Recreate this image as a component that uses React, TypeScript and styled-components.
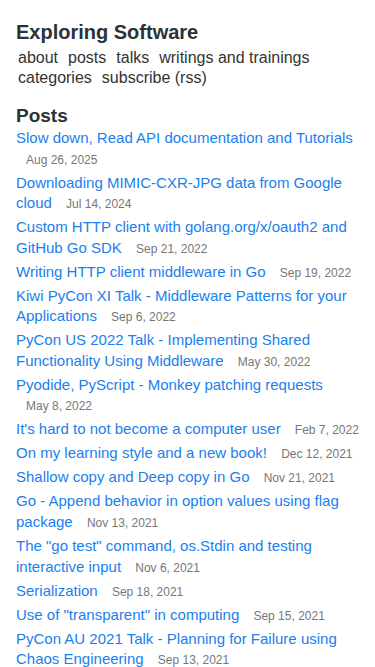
import styled, { createGlobalStyle } from "styled-components";

const GlobalStyle = createGlobalStyle`
  body {
    margin: 0;
    background: #fff;
    font-family: "Liberation Sans", Arial, sans-serif;
  }
`;

const posts = [
  { title: "Slow down, Read API documentation and Tutorials", date: "Aug 26, 2025" },
  { title: "Downloading MIMIC-CXR-JPG data from Google cloud", date: "Jul 14, 2024" },
  { title: "Custom HTTP client with golang.org/x/oauth2 and GitHub Go SDK", date: "Sep 21, 2022" },
  { title: "Writing HTTP client middleware in Go", date: "Sep 19, 2022" },
  { title: "Kiwi PyCon XI Talk - Middleware Patterns for your Applications", date: "Sep 6, 2022" },
  { title: "PyCon US 2022 Talk - Implementing Shared Functionality Using Middleware", date: "May 30, 2022" },
  { title: "Pyodide, PyScript - Monkey patching requests", date: "May 8, 2022" },
  { title: "It's hard to not become a computer user", date: "Feb 7, 2022" },
  { title: "On my learning style and a new book!", date: "Dec 12, 2021" },
  { title: "Shallow copy and Deep copy in Go", date: "Nov 21, 2021" },
  { title: "Go - Append behavior in option values using flag package", date: "Nov 13, 2021" },
  { title: "The \"go test\" command, os.Stdin and testing interactive input", date: "Nov 6, 2021" },
  { title: "Serialization", date: "Sep 18, 2021" },
  { title: "Use of \"transparent\" in computing", date: "Sep 15, 2021" },
  { title: "PyCon AU 2021 Talk - Planning for Failure using Chaos Engineering", date: "Sep 13, 2021" },
];

const navLinks = ["about", "posts", "talks", "writings and trainings", "categories", "subscribe (rss)"];

const App = () => {
  return (
    <Page>
      <GlobalStyle />
      <Header>
        <SiteTitle>Exploring Software</SiteTitle>
        <Nav>
          {navLinks.map((link) => (
            <NavLink href="#" key={link}>
              {link}
            </NavLink>
          ))}
        </Nav>
      </Header>
      <Section>
        <SectionTitle>Posts</SectionTitle>
        <PostList>
          {posts.map((post) => (
            <PostItem key={post.title}>
              <PostLink href="#">{post.title}</PostLink>{" "}
              <PostDate>{post.date}</PostDate>
            </PostItem>
          ))}
        </PostList>
      </Section>
    </Page>
  );
};

export default App;

const Page = styled.div`
  padding: 20px 16px 0;
`;

const Header = styled.header`
  margin-bottom: 16px;
`;

const SiteTitle = styled.h1`
  margin: 0 0 4px;
  font-size: 20px;
  line-height: 24px;
  font-weight: bold;
  color: #2b3338;
`;

const Nav = styled.nav`
  display: flex;
  flex-wrap: wrap;
  column-gap: 10px;
  padding-left: 2px;
`;

const NavLink = styled.a`
  font-size: 16px;
  line-height: 20px;
  color: #333;
  text-decoration: none;
`;

const Section = styled.section``;

const SectionTitle = styled.h2`
  margin: 0;
  font-size: 19px;
  line-height: 24px;
  font-weight: bold;
  color: #2b3338;
`;

const PostList = styled.ul`
  list-style: none;
  margin: 0;
  padding: 0;
`;

const PostItem = styled.li`
  font-size: 15px;
  line-height: 20.6px;
  margin-bottom: 3.4px;
`;

const PostLink = styled.a`
  color: #1a80ee;
  text-decoration: none;
`;

const PostDate = styled.span`
  margin-left: 10px;
  font-size: 12px;
  line-height: 1;
  color: #777;
  white-space: nowrap;
`;
